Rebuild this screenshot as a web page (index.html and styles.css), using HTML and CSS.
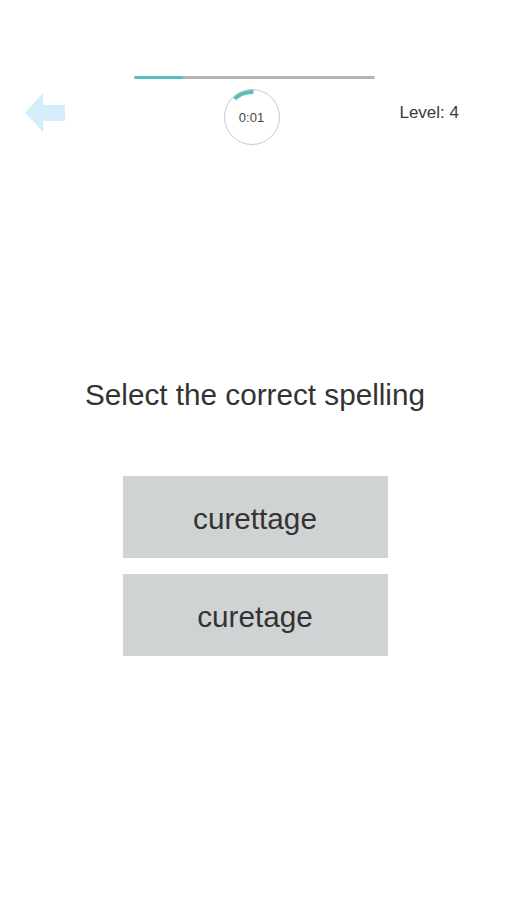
FILE: index.html
```html
<!DOCTYPE html>
<html lang="en">
<head>
<meta charset="utf-8">
<title>Spelling</title>
<link rel="stylesheet" href="styles.css">
</head>
<body>
<header class="top">
  <div class="progress"><div class="progress-fill"></div></div>
  <div class="hud">
    <svg class="back" width="41" height="39" viewBox="0 0 41 39"><polygon points="0,19.5 18,0 18,12 40,12 40,28 18,28 18,39" fill="#d3eefa"/></svg>
    <div class="timer">
      <svg width="56" height="56" viewBox="0 0 56 56">
        <circle cx="28" cy="28" r="27.5" fill="none" stroke="#c9c9c9" stroke-width="1"/>
        <path d="M29.5 3 A25 25 0 0 0 10.6 9.9" fill="none" stroke="#5bbdbd" stroke-width="4"/>
      </svg>
      <span class="time">0:01</span>
    </div>
    <div class="level">Level: 4</div>
  </div>
</header>
<main class="quiz">
  <h1 class="question">Select the correct spelling</h1>
  <div class="options">
    <button class="option">curettage</button>
    <button class="option">curetage</button>
  </div>
</main>
</body>
</html>
```
FILE: styles.css
```css
html, body {
  margin: 0;
  padding: 0;
  background: #ffffff;
}
body {
  font-family: "Liberation Sans", Arial, sans-serif;
  color: #333333;
  width: 507px;
  height: 900px;
}
.top {
  padding-top: 76px;
}
.progress {
  width: 240px;
  height: 3px;
  margin: 0 auto;
  background: #b4b4b4;
  transform: translateX(0.5px);
}
.progress-fill {
  width: 48px;
  height: 100%;
  background: #5bbdbd;
}
.hud {
  display: grid;
  grid-template-columns: 1fr 56px 1fr;
  margin-top: 10px;
  align-items: start;
}
.back {
  display: block;
  margin-left: 25px;
  margin-top: 4px;
}
.timer {
  display: grid;
  width: 56px;
  height: 56px;
  margin-left: -2px;
}
.timer svg,
.timer .time {
  grid-area: 1 / 1;
}
.timer svg {
  display: block;
}
.time {
  align-self: center;
  justify-self: center;
  font-size: 13px;
  line-height: 16px;
  color: #444444;
  padding-top: 2px;
}
.level {
  justify-self: end;
  margin-right: 48px;
  margin-top: 14px;
  font-size: 17px;
  line-height: 20px;
  color: #3a3a3a;
}
.quiz {
  padding-left: 3px;
  display: flex;
  flex-direction: column;
  align-items: center;
}
.question {
  margin: 232px 0 0;
  font-size: 29.7px;
  font-weight: normal;
  line-height: 36px;
  color: #333333;
}
.options {
  margin-top: 63px;
  display: flex;
  flex-direction: column;
  gap: 16px;
}
.option {
  width: 265px;
  height: 82px;
  border: 0;
  margin: 0;
  padding: 3px 0 0;
  background: #d0d3d4;
  font-family: "Liberation Sans", Arial, sans-serif;
  font-size: 29.7px;
  color: #333333;
  display: flex;
  align-items: center;
  justify-content: center;
}
```
